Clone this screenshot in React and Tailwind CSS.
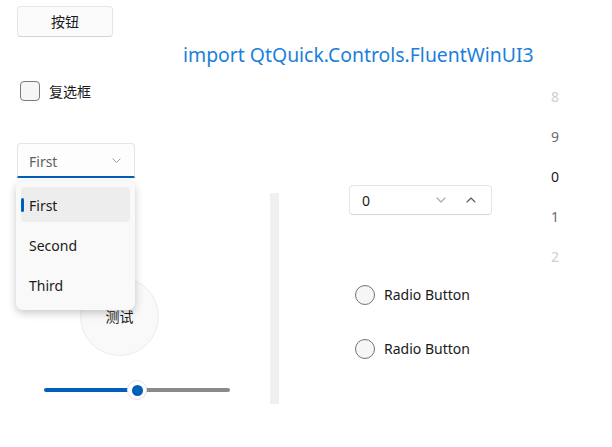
import React from 'react';

const Chevron = ({ up = false, color = '#8a8a8a', w = 10 }) => (
  <svg width={w} height={w * 0.6} viewBox="0 0 10 6" fill="none">
    <polyline
      points={up ? '1,5 5,1 9,5' : '1,1 5,5 9,1'}
      stroke={color}
      strokeWidth="1.1"
      strokeLinecap="round"
      strokeLinejoin="round"
    />
  </svg>
);

const comboItems = ['First', 'Second', 'Third'];

const tumbler = [
  { v: '8', c: 'text-[#cfcfcf]' },
  { v: '9', c: 'text-[#6b6b6b]' },
  { v: '0', c: 'text-[#1a1a1a]' },
  { v: '1', c: 'text-[#6b6b6b]' },
  { v: '2', c: 'text-[#cfcfcf]' },
];

const Radio = ({ label, className }) => (
  <div className={`flex items-center h-[20px] ${className}`}>
    <div className="w-[20px] h-[20px] rounded-full border border-[#727272] bg-[#f6f6f6]" />
    <span className="ml-[9px] text-[14px] text-[#1a1a1a] -mt-[1px]">{label}</span>
  </div>
);

export default function App() {
  return (
    <div className="relative flex w-[612px] h-[447px] bg-white overflow-hidden font-['Noto_Sans','Noto_Sans_CJK_SC',sans-serif]">
      {/* left column */}
      <div className="flex flex-col pl-[17px] w-[183px] shrink-0">
        <div className="mt-[6px] w-[96px] h-[31px] flex items-center justify-center rounded-[4px] border border-[#e5e5e5] border-b-[#d4d4d4] bg-[#fbfbfb] text-[14px] text-[#1a1a1a]">
          按钮
        </div>

        {/* checkbox */}
        <div className="mt-[44px] ml-[3px] flex items-center h-[20px]">
          <div className="w-[20px] h-[20px] rounded-[4px] border border-[#7a7a7a] bg-[#f6f6f6]" />
          <span className="ml-[9px] text-[14px] text-[#1a1a1a]">复选框</span>
        </div>

        {/* combobox */}
        <div className="relative mt-[42px] w-[118px] h-[35px]">
          <div className="flex items-center justify-between h-full pt-[2px] pl-[11px] pr-[13px] rounded-t-[4px] border border-[#e5e5e5] border-b-2 border-b-[#005fb8] bg-[#fdfdfd]">
            <span className="text-[14px] text-[#5f5f5f]">First</span>
            <Chevron w={9} color="#9a9a9a" />
          </div>

          {/* popup */}
          <div className="absolute z-10 top-[38px] left-[-1px] w-[119px] h-[129px] rounded-[7px] bg-[#f9f9f9] shadow-[0_3px_8px_rgba(0,0,0,0.22)] pt-[6px] px-[5px] flex flex-col gap-[5px]">
            {comboItems.map((it, i) => (
              <div
                key={it}
                className={`relative flex items-center h-[35px] pl-[8px] pt-[1px] rounded-[4px] text-[14px] text-[#1a1a1a] ${i === 0 ? 'bg-[#ededed]' : ''}`}
              >
                {i === 0 && <div className="absolute left-0 top-[11px] w-[3px] h-[14px] rounded-full bg-[#005fb8]" />}
                {it}
              </div>
            ))}
          </div>
        </div>

        {/* round button */}
        <div className="mt-[99px] ml-[63px] w-[79px] h-[79px] rounded-full border border-[#ececec] bg-[#f9f9f9] flex items-center justify-center text-[14px] text-[#1a1a1a]">
          测试
        </div>

        {/* slider */}
        <div className="relative mt-[24px] ml-[27px] w-[186px] h-[20px] flex items-center">
          <div className="h-[4px] w-[93px] rounded-l-full bg-[#005fb8]" />
          <div className="h-[4px] flex-1 rounded-r-full bg-[#8a8a8a]" />
          <div className="absolute left-[83px] top-0 w-[20px] h-[20px] rounded-full bg-white border border-[#e3e3e3] flex items-center justify-center">
            <div className="w-[11px] h-[11px] rounded-full bg-[#005fb8]" />
          </div>
        </div>
      </div>

      {/* right part */}
      <div className="flex flex-col">
        <div className="mt-[42px] h-[26px] leading-[26px] text-[19.4px] text-[#1b7fdb] whitespace-nowrap">
          import QtQuick.Controls.FluentWinUI3
        </div>

        <div className="flex">
          {/* vertical bar */}
          <div className="ml-[87px] mt-[125px] w-[9px] h-[211px] bg-[#f0f0f0]" />

          {/* spinbox + radios */}
          <div className="ml-[70px] mt-[117px] flex flex-col">
            <div className="w-[143px] h-[30px] flex items-center rounded-[4px] border border-[#e5e5e5] border-b-[#d6d6d6] bg-white pl-[12px] pr-[15px]">
              <span className="flex-1 text-[14px] text-[#1a1a1a]">0</span>
              <Chevron w={10} color="#a8a8a8" />
              <span className="w-[20px]" />
              <Chevron up w={10} color="#5a5a5a" />
            </div>
            <Radio label="Radio Button" className="mt-[70px] ml-[6px]" />
            <Radio label="Radio Button" className="mt-[34px] ml-[6px]" />
          </div>

          {/* tumbler */}
          <div className="ml-[43px] mt-[8px] w-[40px] flex flex-col">
            {tumbler.map((t) => (
              <div key={t.v} className={`h-[40px] flex items-center justify-center text-[14px] ${t.c}`}>
                {t.v}
              </div>
            ))}
          </div>
        </div>
      </div>
    </div>
  );
}
